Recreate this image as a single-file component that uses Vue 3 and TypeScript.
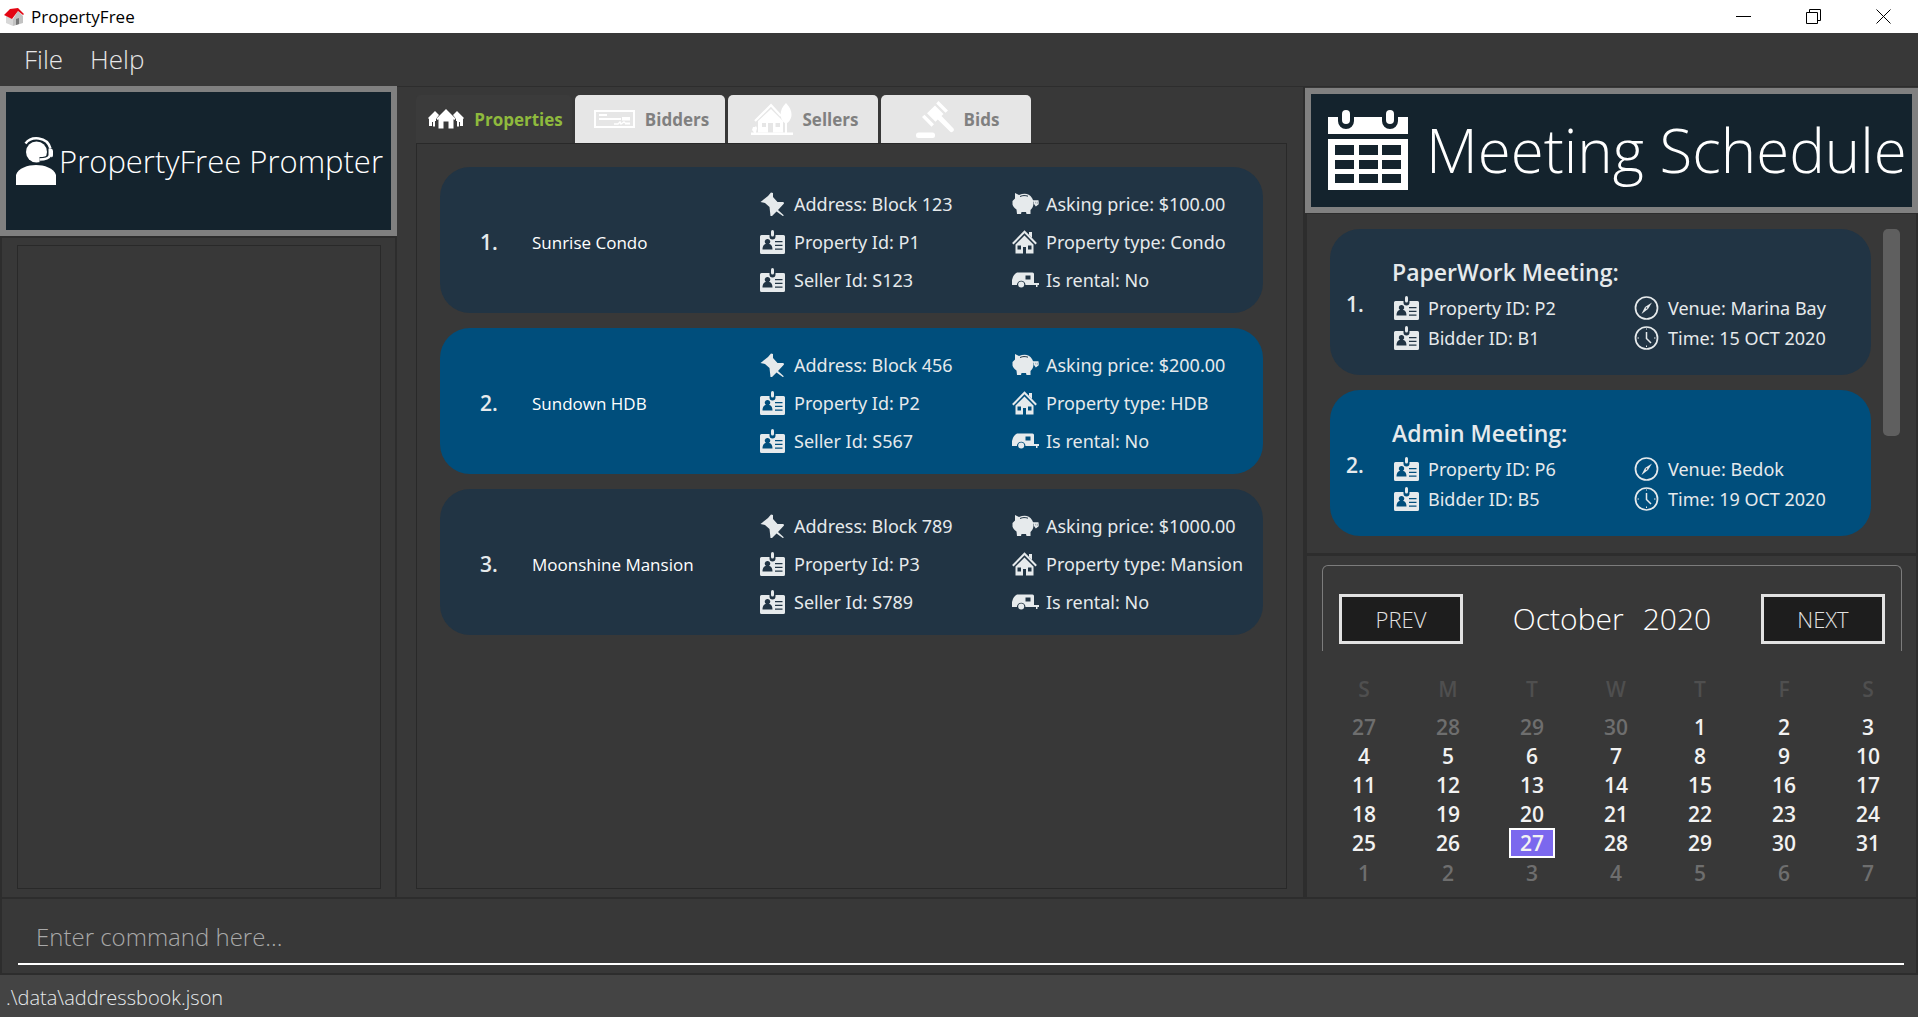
<script setup lang="ts">
import { computed, defineComponent, h, ref } from 'vue'
import type { PropType } from 'vue'

type IconName =
  | 'pin' | 'badge' | 'piggy' | 'house' | 'caravan' | 'compass' | 'clock'
  | 'village' | 'cheque' | 'cottage' | 'gavel' | 'agent' | 'calendar'

interface IconShape {
  box: string
  body: string
}

const shapes: Record<IconName, IconShape> = {
  pin: {
    box: '0 0 25 24',
    body: '<path d="M.5 10 8 4l3-3.500 2 .5v4l4.500 5h6l.5 1.500-6 6.500 5.500 5V24.500l-7-5-4.500 4.500H10.500L9.500 15 5 11z" fill="currentColor"/>',
  },
  badge: {
    box: '0 0 25 24',
    body: '<path fill="currentColor" fill-rule="evenodd" d="M1.500 5H9.500v1.500a3 3 0 0 0 6 0V5H23.500a1.500 1.500 0 0 1 1.500 1.500V22.500a1.500 1.500 0 0 1-1.500 1.500H1.500A1.500 1.500 0 0 1 0 22.500V6.500A1.500 1.500 0 0 1 1.500 5zM7.500 9a2.600 2.600 0 0 0-1.500 4.800C3.500 14.700 2.500 16.500 2.500 19.500h10c0-3-1-4.800-3.500-5.700A2.600 2.600 0 0 0 7.500 9zM15 11h7.500v1.300H15zM15 14.700h7.500V16H15zM15 18.500h7.500v1.300H15z"/><rect x="11" y="0" width="3" height="6.500" rx="1.500" fill="currentColor"/>',
  },
  piggy: {
    box: '0 0 27 24',
    body: '<path fill="currentColor" d="M3 1l4 2c5-2 10-2 13 3 1 2 1.500 3 1.500 5 0 3-1 5-3 7v4h-4l-.5-2H9.500L9 22H5l-.5-4.500C2 16 1 14 .5 12.500V9L3 6.500z"/><path d="M8 4.500c3-1.200 5-1.200 8-.3" fill="none" stroke="#213444" stroke-width="1"/><path d="M21 9h5.500M24.200 9v4M26 9.500v2.500l-2 1.500-1.500-2V9" fill="none" stroke="currentColor" stroke-width="1.400"/>',
  },
  house: {
    box: '0 0 25 24',
    body: '<path fill="none" stroke="currentColor" stroke-width="2" d="M.8 13.800 12.500 1.800l11.700 12"/><path fill="currentColor" d="M17 2h3v6l-3-3z"/><path fill="currentColor" fill-rule="evenodd" d="M12.500 5.500 21.500 14.500V23.500H14v-6.500h-3v6.500H3.500V14.500zM5.500 15.500v4H9v-4zM16 15.500v4h3.500v-4z"/>',
  },
  caravan: {
    box: '0 0 27 16',
    body: '<path fill="currentColor" fill-rule="evenodd" d="M5 .5H20.500q1.500 0 1.500 1.500V11H27v2h-1.500v2H24v-2H13.500a4.300 4.300 0 0 0-8.600 0H0V8Q1 2.500 5 .5zM13.500 3.500v4H18.500v-4z"/><circle cx="9.200" cy="12.600" r="3" fill="currentColor"/>',
  },
  compass: {
    box: '0 0 24 24',
    body: '<circle cx="12" cy="12" r="11" fill="none" stroke="currentColor" stroke-width="1.700"/><path fill="currentColor" d="M17.500 6.500 13.500 13 7 18l3.500-7z"/><circle cx="12" cy="12" r=".8" fill="#213444"/>',
  },
  clock: {
    box: '0 0 24 24',
    body: '<circle cx="12" cy="12" r="11" fill="none" stroke="currentColor" stroke-width="1.700"/><path fill="none" stroke="currentColor" stroke-width="1.500" d="M12 6v6.500l4.500 4.500"/><path stroke="currentColor" d="M3 12h1.500M19.500 12H21M12 2.500v1M12 19.500V21"/>',
  },
  village: {
    box: '0 0 36 20',
    body: '<path fill="currentColor" d="M0 9 7 2l4 4-3 4v2h-1v5.500H5V13H4v4H1V10zM36 9l-7-7-4 4 3 4v2h1v5.500h2V13h1v4h3V10z"/><path fill="currentColor" d="M18 0 27.500 9.500l-1 1.500-1-.8V19.500H20.500V12.500h-5v7H10.500V10.200l-1 .8-1-1.500z"/>',
  },
  cheque: {
    box: '0 0 41 18',
    body: '<rect x="1" y="1" width="39" height="16" fill="none" stroke="currentColor" stroke-width="2"/><path stroke="currentColor" stroke-width="1.800" d="M5 5h8M5 9h22M28 9.500h8M28 8h8M31 13.500h5"/><path fill="none" stroke="currentColor" stroke-width="1.400" d="M20 14h4l2-2 1 2 3-2 1 1"/>',
  },
  cottage: {
    box: '0 0 42 32',
    body: '<path fill="none" stroke="currentColor" stroke-width="2.200" d="M4 18 20 2.200 30 13"/><path fill="currentColor" fill-rule="evenodd" d="M20 6 32 18v11.500H22V20H17v9.500H7V18zM11 20v4h4v-4zM24.500 20v4H29v-4z"/><path fill="currentColor" d="M35 0c7 7 7 15 2 19.500l-1 .5v9.500h-2V20l-1-.5C28 15 28.500 6 35 0zM0 29.500h42V32H0zM2 24h2l1-1 1 2-1 4.500H3L1 27z"/>',
  },
  gavel: {
    box: '0 0 38 37',
    body: '<g fill="currentColor"><path d="M22.500 0 32 9.500l-2.500 2.300L20.200 2.500zM8.500 13.700l9.500 9.500-2.500 2.500L6 16zM19 4.500l8.500 8.500-2 2L37.500 27.500q1 2-.5 3-2 1.500-3 0L21.800 18.500l-2.300 2.300-8.500-8.500z"/><rect x="0" y="31.500" width="19" height="5.500" rx="2.500"/></g>',
  },
  agent: {
    box: '0 0 40 48',
    body: '<circle cx="20.500" cy="15" r="10.500" fill="currentColor"/><path fill="currentColor" d="M0 48V38C2 31 12 28 20 28s18 3 20 10V48z"/><path d="M9.500 6.500C15-1 31-1 34.500 11.500" fill="none" stroke="currentColor" stroke-width="2.500"/><path d="M32.500 11.500h2.200a2.500 2.500 0 0 1 2.300 2.500v4a2.500 2.500 0 0 1-2.500 2.500h-2z" fill="currentColor"/><path d="M33.500 19c-1 2-5 3.500-10 3.500" fill="none" stroke="#14232d" stroke-width="5"/><path d="M34 18.500c-1 2.500-5 4-10.500 4" fill="none" stroke="currentColor" stroke-width="2.600"/>',
  },
  calendar: {
    box: '0 0 80 80',
    body: '<path fill="currentColor" fill-rule="evenodd" d="M0 7H10v4a8 8 0 0 0 16 0V7H54v4a8 8 0 0 0 16 0V7H80V24H0zM0 29H80V80H0zM7 35v10H26V35zM31 35v10H50V35zM54 35v10H73V35zM7 50v9H26V50zM31 50v9H50V50zM54 50v9H73V50zM7 64v9H26V64zM31 64v9H50V64zM54 64v9H73V64z"/><rect x="14" y="0" width="8" height="14" rx="4" fill="currentColor"/><rect x="58" y="0" width="8" height="14" rx="4" fill="currentColor"/>',
  },
}

const Icon = defineComponent({
  props: {
    name: { type: String as PropType<IconName>, required: true },
  },
  setup(props) {
    return () =>
      h('svg', {
        viewBox: shapes[props.name].box,
        'aria-hidden': 'true',
        innerHTML: shapes[props.name].body,
      })
  },
})

interface Tab {
  label: string
  icon: IconName
}

interface Property {
  name: string
  address: string
  id: string
  seller: string
  price: string
  type: string
  rental: string
}

interface Meeting {
  title: string
  property: string
  bidder: string
  venue: string
  time: string
}

interface Day {
  value: number
  outside: boolean
  today: boolean
}

const tabs: Tab[] = [
  { label: 'Properties', icon: 'village' },
  { label: 'Bidders', icon: 'cheque' },
  { label: 'Sellers', icon: 'cottage' },
  { label: 'Bids', icon: 'gavel' },
]
const activeTab = ref('Properties')

const properties: Property[] = [
  { name: 'Sunrise Condo', address: 'Block 123', id: 'P1', seller: 'S123', price: '$100.00', type: 'Condo', rental: 'No' },
  { name: 'Sundown HDB', address: 'Block 456', id: 'P2', seller: 'S567', price: '$200.00', type: 'HDB', rental: 'No' },
  { name: 'Moonshine Mansion', address: 'Block 789', id: 'P3', seller: 'S789', price: '$1000.00', type: 'Mansion', rental: 'No' },
]

const facts = (p: Property): { icon: IconName; text: string }[] => [
  { icon: 'pin', text: `Address: ${p.address}` },
  { icon: 'piggy', text: `Asking price: ${p.price}` },
  { icon: 'badge', text: `Property Id: ${p.id}` },
  { icon: 'house', text: `Property type: ${p.type}` },
  { icon: 'badge', text: `Seller Id: ${p.seller}` },
  { icon: 'caravan', text: `Is rental: ${p.rental}` },
]

const meetings: Meeting[] = [
  { title: 'PaperWork Meeting:', property: 'P2', bidder: 'B1', venue: 'Marina Bay', time: '15 OCT 2020' },
  { title: 'Admin Meeting:', property: 'P6', bidder: 'B5', venue: 'Bedok', time: '19 OCT 2020' },
]

const meetingFacts = (m: Meeting): { icon: IconName; text: string }[] => [
  { icon: 'badge', text: `Property ID: ${m.property}` },
  { icon: 'compass', text: `Venue: ${m.venue}` },
  { icon: 'badge', text: `Bidder ID: ${m.bidder}` },
  { icon: 'clock', text: `Time: ${m.time}` },
]

const weekdays = ['S', 'M', 'T', 'W', 'T', 'F', 'S']
const monthNames = [
  'January', 'February', 'March', 'April', 'May', 'June',
  'July', 'August', 'September', 'October', 'November', 'December',
]
const today = new Date(2020, 9, 27)
const shown = ref(new Date(2020, 9, 1))

const weeks = computed<Day[][]>(() => {
  const year = shown.value.getFullYear()
  const month = shown.value.getMonth()
  const offset = new Date(year, month, 1).getDay()
  return Array.from({ length: 6 }, (_, row) =>
    Array.from({ length: 7 }, (_, col) => {
      const date = new Date(year, month, 1 - offset + row * 7 + col)
      return {
        value: date.getDate(),
        outside: date.getMonth() !== month,
        today: date.getTime() === today.getTime(),
      }
    }),
  )
})

function step(by: number): void {
  shown.value = new Date(shown.value.getFullYear(), shown.value.getMonth() + by, 1)
}

const command = ref('')
</script>

<template>
  <div class="window">
    <header class="titlebar">
      <svg class="app-icon" viewBox="0 0 20 18" aria-hidden="true">
        <path d="M2 8 9 11v7l-7-3z" fill="#d8d8d8" />
        <path d="M9 11 14 3l5 5v7l-10 3z" fill="#c2c2c2" />
        <path d="M12 11l3-1v6l-3 1z" fill="#777" />
        <path d="M0 7 6 1l8-1 6 6-1 1-5-4-6 8z" fill="#e30613" />
      </svg>
      <span class="app-name">PropertyFree</span>
      <button class="win" type="button" aria-label="Minimise">
        <svg viewBox="0 0 15 15"><path d="M0 7.500h15" /></svg>
      </button>
      <button class="win" type="button" aria-label="Restore">
        <svg viewBox="0 0 15 15"><path d="M.5 3.500h11v11H.5zM3.500 3.500v-3h11v11h-3" /></svg>
      </button>
      <button class="win" type="button" aria-label="Close">
        <svg viewBox="0 0 15 15"><path d="M.5.5l14 14M14.500.5l-14 14" /></svg>
      </button>
    </header>

    <nav class="menubar">
      <button type="button">File</button>
      <button type="button">Help</button>
    </nav>

    <main class="panes">
      <section class="pane prompter">
        <h2 class="banner prompter-banner">
          <Icon name="agent" class="agent" />
          <span>PropertyFree Prompter</span>
        </h2>
        <div class="prompter-body">
          <div class="output"></div>
        </div>
      </section>

      <section class="pane records">
        <div class="tabs" role="tablist">
          <button
            v-for="tab in tabs"
            :key="tab.label"
            type="button"
            role="tab"
            class="tab"
            :class="{ active: tab.label === activeTab }"
            :aria-selected="tab.label === activeTab"
            @click="activeTab = tab.label"
          >
            <Icon :name="tab.icon" :class="tab.icon" />
            <span>{{ tab.label }}</span>
          </button>
        </div>
        <div class="tab-body">
          <ol class="cards">
            <li v-for="(p, i) in properties" :key="p.id" class="card property" :class="{ alt: i % 2 === 1 }">
              <span class="index">{{ i + 1 }}.</span>
              <span class="name">{{ p.name }}</span>
              <ul class="facts">
                <li v-for="fact in facts(p)" :key="fact.text">
                  <Icon :name="fact.icon" :class="fact.icon" />
                  <span>{{ fact.text }}</span>
                </li>
              </ul>
            </li>
          </ol>
        </div>
      </section>

      <section class="pane schedule">
        <h2 class="banner schedule-banner">
          <Icon name="calendar" class="calendar-icon" />
          <span>Meeting Schedule</span>
        </h2>
        <div class="meetings">
          <ol class="cards">
            <li v-for="(m, i) in meetings" :key="m.title" class="card meeting" :class="{ alt: i % 2 === 1 }">
              <span class="index">{{ i + 1 }}.</span>
              <div class="meeting-body">
                <h3>{{ m.title }}</h3>
                <ul class="facts">
                  <li v-for="fact in meetingFacts(m)" :key="fact.text">
                    <Icon :name="fact.icon" :class="fact.icon" />
                    <span>{{ fact.text }}</span>
                  </li>
                </ul>
              </div>
            </li>
          </ol>
          <div class="scrollbar"><div class="thumb"></div></div>
        </div>

        <div class="month">
          <div class="month-head">
            <button type="button" @click="step(-1)">PREV</button>
            <h3><span>{{ monthNames[shown.getMonth()] }}</span><span>{{ shown.getFullYear() }}</span></h3>
            <button type="button" @click="step(1)">NEXT</button>
          </div>
          <table>
            <thead>
              <tr><th v-for="(d, i) in weekdays" :key="i" scope="col">{{ d }}</th></tr>
            </thead>
            <tbody>
              <tr v-for="(week, r) in weeks" :key="r">
                <td v-for="(day, c) in week" :key="c" :class="{ outside: day.outside }">
                  <span :class="{ today: day.today }">{{ day.value }}</span>
                </td>
              </tr>
            </tbody>
          </table>
        </div>
      </section>
    </main>

    <form class="command" @submit.prevent>
      <input v-model="command" type="text" aria-label="Command" placeholder="Enter command here..." />
    </form>

    <footer class="status">.\data\addressbook.json</footer>
  </div>
</template>

<style>
body {
  margin: 0;
  background: #383838;
}
</style>

<style scoped>
.window {
  display: grid;
  grid-template-rows: 33px 53px minmax(0, 1fr) 76px 42px;
  height: 100vh;
  background: #383838;
  color: #e6eaec;
  font-family: "Open Sans", "Noto Sans", sans-serif;
  font-size: 18px;
}

button,
input {
  font-family: inherit;
}

ol,
ul {
  list-style: none;
  margin: 0;
  padding: 0;
}

h2,
h3 {
  margin: 0;
}

svg {
  display: block;
  flex: none;
}

.titlebar {
  display: flex;
  align-items: center;
  background: #fff;
  color: #000;
}

.app-icon {
  width: 20px;
  height: 18px;
  margin: 0 7px 0 4px;
}

.app-name {
  margin-right: auto;
  font-size: 17px;
}

.win {
  display: grid;
  place-items: center;
  width: 70px;
  height: 33px;
  padding: 0;
  border: 0;
  background: none;
}

.win svg {
  width: 15px;
  height: 15px;
  fill: none;
  stroke: #000;
}

.menubar {
  display: flex;
  align-items: center;
  gap: 27px;
  padding: 0 24px 2px;
}

.menubar button {
  padding: 0;
  border: 0;
  background: none;
  color: #e6e6e6;
  font-size: 26px;
  font-weight: 300;
}

.panes {
  display: grid;
  grid-template-columns: minmax(0, 397fr) minmax(0, 908fr) minmax(0, 613fr);
  min-height: 0;
}

.pane {
  display: flex;
  flex-direction: column;
  min-width: 0;
  min-height: 0;
}

.banner {
  display: flex;
  align-items: center;
  box-sizing: border-box;
  border: 6px solid #808080;
  background: #14232d;
  color: #fff;
  font-weight: 300;
  white-space: nowrap;
}

.prompter-banner {
  height: 150px;
  gap: 3px;
  padding-left: 10px;
  font-size: 31px;
}

.agent {
  width: 40px;
  height: 48px;
}

.prompter-body {
  flex: 1;
  padding: 7px 14px 8px 15px;
  border: 2px solid #2d2d2d;
}

.output {
  box-sizing: border-box;
  height: 100%;
  border: 1px solid #292929;
}

.records {
  padding: 8px 16px 8px 19px;
  border: solid #2d2d2d;
  border-width: 1px 2px 2px 0;
}

.tabs {
  display: flex;
  gap: 3px;
}

.tab {
  display: flex;
  align-items: center;
  justify-content: center;
  gap: 10px;
  width: 150px;
  height: 48px;
  padding: 0 0 0 3px;
  border: 0;
  border-radius: 5px 5px 0 0;
  background: #e6e6e6;
  color: #808080;
  font-size: 17px;
  font-weight: 700;
}

.tab.active {
  width: 156px;
  background: #3b3b3b;
  color: #8fba3d;
}

.tab svg {
  color: #fff;
}

.village {
  width: 36px;
  height: 20px;
}

.cheque {
  width: 41px;
  height: 18px;
}

.cottage {
  width: 42px;
  height: 32px;
}

.gavel {
  width: 38px;
  height: 37px;
}

.tab-body {
  flex: 1;
  padding: 23px;
  border: 1px solid #292929;
}

.cards {
  display: grid;
  align-content: start;
  gap: 15px;
}

.card {
  display: grid;
  align-items: center;
  box-sizing: border-box;
  height: 146px;
  border-radius: 30px;
  background: #213444;
  white-space: nowrap;
}

.card.alt {
  background: #004e7c;
}

.index {
  font-size: 21px;
  font-weight: 600;
}

.property {
  grid-template-columns: 52px minmax(0, 228fr) minmax(0, 503fr);
  padding: 4px 0 0 40px;
}

.name {
  font-size: 17px;
  color: #fff;
}

.facts li {
  display: flex;
  align-items: center;
}

.facts svg {
  width: 25px;
  height: 24px;
  margin-right: 9px;
}

.facts .piggy,
.facts .caravan {
  width: 27px;
  margin-right: 7px;
}

.facts {
  display: grid;
  font-family: "Noto Sans", "Open Sans", sans-serif;
  font-size: 18px;
}

.property .facts {
  grid-template-columns: minmax(0, 252fr) minmax(0, 251fr);
  grid-auto-rows: 38px;
}

.meetings {
  display: grid;
  grid-template-columns: minmax(0, 1fr) 17px;
  gap: 12px;
  flex: none;
  height: 322px;
  padding: 15px 16px 2px 23px;
  border: 2px solid #2d2d2d;
  border-top-width: 1px;
}

.scrollbar .thumb {
  height: 207px;
  border-radius: 5px;
  background: #5f5f5f;
}

.meeting {
  grid-template-columns: 46px minmax(0, 1fr);
  padding: 4px 0 0 16px;
}

.meeting h3 {
  font-size: 23px;
  line-height: 34px;
  padding-bottom: 4px;
  font-weight: 600;
}

.meeting .facts {
  grid-template-columns: minmax(0, 240fr) minmax(0, 237fr);
  grid-auto-rows: 30px;
  padding-left: 2px;
}

.schedule {
  padding-top: 1px;
  border-top: 1px solid #2d2d2d;
}

.schedule-banner {
  flex: none;
  height: 125px;
  gap: 18px;
  padding: 0 0 2px 17px;
  font-size: 60px;
}

.calendar-icon {
  width: 80px;
  height: 80px;
}

.month {
  flex: 1;
  padding: 9px 6px 0 15px;
  border: solid #2d2d2d;
  border-width: 1px 2px 2px;
}

.month-head {
  display: flex;
  align-items: center;
  justify-content: space-between;
  box-sizing: border-box;
  height: 86px;
  margin-right: 8px;
  padding: 20px 16px 0;
  border: 1px solid #7c7c7c;
  border-bottom: 0;
  border-radius: 6px 6px 0 0;
}

.month-head h3 {
  display: flex;
  gap: 19px;
  color: #fff;
  font-size: 30px;
  font-weight: 300;
}

.month-head button {
  width: 124px;
  height: 50px;
  padding: 0;
  border: 3px solid #e2e2e2;
  background: #1d1d1d;
  color: #e2e2e2;
  font-size: 22px;
  font-weight: 300;
}

table {
  width: 100%;
  margin-top: 14px;
  border-collapse: collapse;
  table-layout: fixed;
  color: #f2f2f2;
  font-size: 21px;
}

th,
td {
  height: 29px;
  padding: 0;
  font-weight: 600;
  line-height: 26px;
  text-align: center;
}

th {
  height: 47px;
  color: #4f4f4f;
}

.outside {
  color: #6e6e6e;
}

.today {
  display: inline-block;
  width: 42px;
  border: 2px solid #fff;
  background: #7b68ee;
}

.command {
  padding: 0 12px 8px 16px;
  border: 2px solid #2d2d2d;
  border-top-width: 0;
}

.command input {
  box-sizing: border-box;
  width: 100%;
  height: 66px;
  padding: 10px 20px 0 18px;
  border: 0;
  border-bottom: 2px solid #fff;
  outline: 0;
  background: transparent;
  color: #fff;
  font-size: 24px;
  font-weight: 300;
}

.command input::placeholder {
  color: #a9a9a9;
  opacity: 1;
}

.status {
  padding-left: 6px;
  background: #444;
  font-size: 20px;
  font-weight: 300;
  line-height: 46px;
}
</style>
